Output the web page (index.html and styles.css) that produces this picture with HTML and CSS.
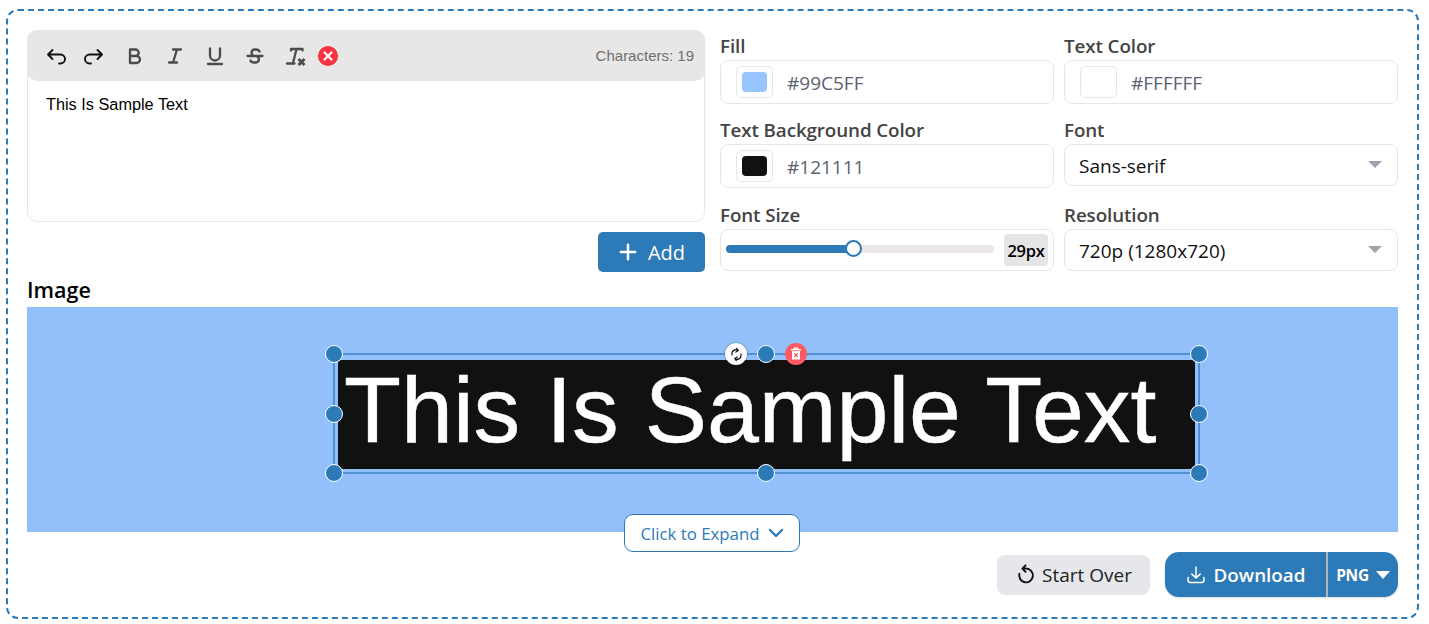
FILE: index.html
```html
<!DOCTYPE html>
<html lang="en">
<head>
<meta charset="utf-8">
<title>Text to Image</title>
<link rel="stylesheet" href="styles.css">
</head>
<body>
<main class="panel">
  <section class="top">
    <div class="left">
      <div class="editor">
        <div class="toolbar">
          <button class="tb tb-n"><svg class="ic dark" viewBox="0 0 24 24"><path d="M8.500 15L4 10.500 8.500 6M4 10.500h12.500a4.500 4.500 0 0 1 0 9H15"/></svg></button>
          <button class="tb tb-n"><svg class="ic dark" viewBox="0 0 24 24"><path d="M15.500 15L20 10.500 15.500 6M20 10.500H7.500a4.500 4.500 0 0 0 0 9H9"/></svg></button>
          <button class="tb tb-b"><svg class="ic" viewBox="0 0 24 24"><path d="M7 5.500h5.500a3.250 3.250 0 0 1 0 6.500H7zM12.500 12h1a3.500 3.500 0 0 1 0 7H7v-7"/></svg></button>
          <button class="tb"><svg class="ic" viewBox="0 0 24 24"><path d="M10 5.500h8M6 18.500h8M14 5.500l-4 13"/></svg></button>
          <button class="tb"><svg class="ic" viewBox="0 0 24 24"><path d="M7 4.500v7a5 5 0 0 0 10 0v-7M5 20h14"/></svg></button>
          <button class="tb"><svg class="ic" viewBox="0 0 24 24"><path d="M4.500 12h15M16.500 7.500a3.800 2.800 0 0 0-3.800-2h-1.400a3.300 3.300 0 0 0 0 6.500h1.900a3.300 3.300 0 0 1 0 6.500h-1.900a3.800 2.800 0 0 1-3.800-2"/></svg></button>
          <button class="tb"><svg class="ic" viewBox="0 0 24 24"><path d="M8 6.500v-1.500h11.500v1.500M4 19.500h7.500M13.500 5l-3.500 14"/><path class="thick" d="M15.500 15l6 6m0-6l-6 6"/></svg></button>
          <button class="clear"><svg viewBox="0 0 20 20"><path d="M6.500 6.500l7 7m0-7l-7 7"/></svg></button>
          <span class="count">Characters: 19</span>
        </div>
        <div class="editor-body">This Is Sample Text</div>
      </div>
      <div class="add-row">
        <button class="add"><svg viewBox="0 0 20 20"><path d="M10 2v16M2 10h16"/></svg><span>Add</span></button>
      </div>
    </div>
    <div class="controls">
      <div class="field">
        <label>Fill</label>
        <div class="box color"><span class="swatch"><i class="chip chip-fill"></i></span><span class="hex">#99C5FF</span></div>
      </div>
      <div class="field">
        <label>Text Color</label>
        <div class="box color"><span class="swatch"><i class="chip chip-white"></i></span><span class="hex">#FFFFFF</span></div>
      </div>
      <div class="field">
        <label>Text Background Color</label>
        <div class="box color"><span class="swatch"><i class="chip chip-dark"></i></span><span class="hex">#121111</span></div>
      </div>
      <div class="field">
        <label>Font</label>
        <div class="box select"><span>Sans-serif</span><i class="caret"></i></div>
      </div>
      <div class="field field-low">
        <label>Font Size</label>
        <div class="box slider">
          <div class="track"><div class="fill"></div><i class="thumb"></i></div>
          <span class="value">29px</span>
        </div>
      </div>
      <div class="field field-low">
        <label>Resolution</label>
        <div class="box select"><span>720p (1280x720)</span><i class="caret"></i></div>
      </div>
    </div>
  </section>
  <h2 class="image-title">Image</h2>
  <section class="stage">
    <div class="selection"></div>
    <div class="textbox">This Is Sample Text</div>
    <i class="handle h-tl"></i><i class="handle h-tc"></i><i class="handle h-tr"></i>
    <i class="handle h-ml"></i><i class="handle h-mr"></i>
    <i class="handle h-bl"></i><i class="handle h-bc"></i><i class="handle h-br"></i>
    <span class="rotate"><svg viewBox="0 0 16 16"><path d="M3.200 8.500V7a4 4 0 0 1 6.500-3.200M8.200 1.300l1.700 2.500-2.600 1.600M12.800 7.500V9a4 4 0 0 1-6.500 3.200M7.800 14.700l-1.700-2.500 2.600-1.600"/></svg></span>
    <span class="trash"><svg viewBox="0 0 16 16"><path class="t-fill" d="M4 5h8v8.500H4z"/><path class="t-line" d="M3 3.600h10M6.300 3.300V2.200h3.400v1.100"/><path class="t-x" d="M6.400 7.400l3.200 3.600m0-3.600l-3.200 3.600"/></svg></span>
    <button class="expand"><span>Click to Expand</span><svg viewBox="0 0 16 16"><path d="M2 5l6 6 6-6"/></svg></button>
  </section>
  <section class="actions">
    <button class="over"><svg viewBox="0 0 24 24"><path d="M11.500 1.500L8 5l3.500 3.500M9 5h3a7.500 7.500 0 1 1-7.200 5.500"/></svg><span>Start Over</span></button>
    <div class="download">
      <button class="dl"><svg viewBox="0 0 24 24"><path d="M12 2.500v13M7 11l5 4.500 5-4.500M2.500 15v3.500a2.500 2.500 0 0 0 2.500 2.500h14a2.500 2.500 0 0 0 2.500-2.500V15"/></svg><span>Download</span></button>
      <button class="fmt"><span>PNG</span><i class="fmt-caret"></i></button>
    </div>
  </section>
</main>
</body>
</html>
```

FILE: styles.css
```css
* { box-sizing: border-box; }
html, body { margin: 0; padding: 0; background: #fff; overflow: hidden; }
body { font-family: "Open Sans", "Noto Sans", sans-serif; color: #111; }
button { font: inherit; border: 0; padding: 0; background: none; }

.panel {
  margin: 9px 10px 0 6px;
  width: 1413px;
  height: 610px;
  border: 2px dashed #2d7ab8;
  border-radius: 12px;
  padding: 19px 19px 0 19px;
}

.top { display: flex; gap: 15px; }
.left { width: 678px; flex: none; }
.editor { height: 192px; border: 1px solid #e5e7eb; border-radius: 10px; }
.toolbar {
  margin: -1px -1px 0;
  height: 51px;
  background: #e7e7e7;
  border-radius: 10px;
  display: flex;
  align-items: center;
  padding: 0 11px 0 10px;
}
.tb { width: 40px; height: 40px; display: flex; align-items: center; justify-content: center; }
.tb-n { width: 38px; }
.tb-b { margin-left: 2px; }
.ic { width: 24px; height: 24px; fill: none; stroke: #4b4b4b; stroke-width: 2.300; stroke-linecap: round; stroke-linejoin: round; }
.ic.dark { stroke: #111; stroke-width: 1.900; }
.thick { stroke-width: 2.900; stroke-linecap: butt; }
.clear { width: 20px; height: 20px; border-radius: 50%; background: #f5323f; margin-left: 3px; display: flex; }
.clear svg { width: 20px; height: 20px; fill: none; stroke: #fff; stroke-width: 2.200; stroke-linecap: round; }
.count { margin-left: auto; font: 15px "Liberation Sans", Arial, sans-serif; color: #6f6f6f; }
.editor-body { padding: 13px 18px; font: 16.300px/20px "Liberation Sans", Arial, sans-serif; color: #000; }

.add-row { display: flex; justify-content: flex-end; margin-top: 10px; }
.add {
  width: 107px; height: 40px; background: #2d7ab8; color: #fff; border-radius: 5px;
  display: flex; align-items: center; justify-content: center; gap: 11px; font-size: 20px; padding-left: 1px;
}
.add svg { width: 18px; height: 18px; fill: none; stroke: #fff; stroke-width: 2.800; stroke-linecap: round; }

.controls {
  flex: 1;
  padding-top: 3px;
  display: grid;
  grid-template-columns: 334px 334px;
  column-gap: 10px;
  row-gap: 13px;
  align-content: start;
}
.field-low { margin-top: 1px; }
.field label { display: block; height: 27px; line-height: 27px; font-size: 18.800px; font-weight: 600; color: #444; letter-spacing: -.1px; }
.box { border: 1px solid #e5e7eb; border-radius: 8px; background: #fff; display: flex; align-items: center; }
.color { height: 44px; padding-left: 15px; }
.swatch { width: 37px; height: 32px; border: 1px solid #e5e7eb; border-radius: 5px; padding: 5px; display: block; flex: none; }
.chip { display: block; width: 100%; height: 100%; border-radius: 4px; }
.chip-fill { background: #99c5ff; }
.chip-white { background: #fff; }
.chip-dark { background: #121111; }
.hex { margin-left: 14px; font-size: 19px; color: #5b6270; padding-top: 1px; }
.select { height: 42px; padding: 1px 14px 0; justify-content: space-between; font-size: 19px; color: #111; }
.caret { width: 0; height: 0; border-left: 7px solid transparent; border-right: 7px solid transparent; border-top: 7px solid #9ca3af; margin-right: 1px; margin-top: -2px; }
.slider { height: 42px; padding: 0 5px; }
.track { position: relative; width: 268px; height: 8px; border-radius: 4px; background: #ebe6e6; margin-top: -2px; }
.fill { width: 127px; height: 8px; border-radius: 4px; background: #2d7ab8; }
.thumb { position: absolute; left: 119px; top: -5px; width: 17px; height: 17px; border-radius: 50%; background: #fff; border: 2.500px solid #2d7ab8; }
.value { margin-left: 10px; width: 44px; height: 32px; line-height: 34px; background: #e5e5e5; border-radius: 4px; text-align: center; font-size: 16.500px; font-weight: 600; color: #000; letter-spacing: -.3px; }

.image-title { margin: 4px 0 0; height: 31px; line-height: 28px; font-size: 21.500px; font-weight: 600; color: #000; }

.stage { position: relative; width: 1371px; height: 225px; background: #93c0fb; }
.selection { position: absolute; left: 306px; top: 46px; width: 867px; height: 121px; border: 2px solid #4e92d4; }
.textbox {
  position: absolute; left: 311px; top: 53px; width: 857px; height: 109px;
  background: #121111; border-radius: 3px; color: #fff;
  font: 93.300px/101px "Liberation Sans", Arial, sans-serif; white-space: nowrap; padding-left: 6px;
  -webkit-text-stroke: .5px #fff;
}
.handle { position: absolute; width: 18px; height: 18px; margin: -9px 0 0 -9px; border-radius: 50%; background: #2d7ab8; border: 1.500px solid #fff; }
.h-tl { left: 307px; top: 47px; } .h-tc { left: 739px; top: 47px; } .h-tr { left: 1172px; top: 47px; }
.h-ml { left: 307px; top: 107px; } .h-mr { left: 1172px; top: 107px; }
.h-bl { left: 307px; top: 166px; } .h-bc { left: 739px; top: 166px; } .h-br { left: 1172px; top: 166px; }
.rotate, .trash { position: absolute; top: 36px; width: 22px; height: 22px; border-radius: 50%; display: flex; align-items: center; justify-content: center; }
.rotate { left: 698px; background: #fff; box-shadow: 0 0 2px rgba(0,0,0,.5); }
.rotate svg { width: 15px; height: 15px; fill: none; stroke: #111; stroke-width: 1.300; stroke-linecap: round; stroke-linejoin: round; }
.trash { left: 758px; background: #ff5a5f; }
.trash svg { width: 16px; height: 16px; }
.t-fill { fill: #fff; }
.t-line { fill: none; stroke: #fff; stroke-width: 1.300; }
.t-x { fill: none; stroke: #ff5a5f; stroke-width: 1.400; }
.expand {
  position: absolute; left: 597px; top: 207px; width: 176px; height: 38px;
  background: #fff; border: 1px solid #2d7ab8; border-radius: 9px; color: #2d7ab8; font-size: 16.800px;
  display: flex; align-items: center; justify-content: center; gap: 9px; padding-left: 1px;
}
.expand svg { width: 16px; height: 16px; fill: none; stroke: #2d7ab8; stroke-width: 2.400; stroke-linecap: round; stroke-linejoin: round; }

.actions { display: flex; justify-content: flex-end; align-items: center; gap: 15px; margin-top: 20px; }
.over {
  width: 153px; height: 40px; background: #e5e7eb; border-radius: 8px; color: #222; font-size: 19px;
  display: flex; align-items: center; justify-content: center; gap: 5px;
}
.over span, .dl span { padding-top: 1px; }
.over svg { width: 22px; height: 22px; fill: none; stroke: #111; stroke-width: 2.100; stroke-linecap: round; stroke-linejoin: round; }
.download { width: 233px; height: 45px; display: flex; background: #2d7ab8; border-radius: 14px; color: #fff; overflow: hidden; box-shadow: 0 1px 2px rgba(0,0,0,.15); }
.dl { width: 161px; display: flex; align-items: center; justify-content: center; gap: 8px; color: #fff; font-size: 18.800px; font-weight: 600; }
.dl svg { width: 20px; height: 20px; fill: none; stroke: #fff; stroke-width: 1.800; stroke-linecap: round; stroke-linejoin: round; }
.fmt { flex: 1; border-left: 2px solid #b5b5b5; display: flex; align-items: center; justify-content: center; gap: 7px; color: #fff; font-size: 15.500px; font-weight: 700; letter-spacing: -.3px; }
.fmt-caret { width: 0; height: 0; border-left: 7px solid transparent; border-right: 7px solid transparent; border-top: 8px solid #fff; }
```
